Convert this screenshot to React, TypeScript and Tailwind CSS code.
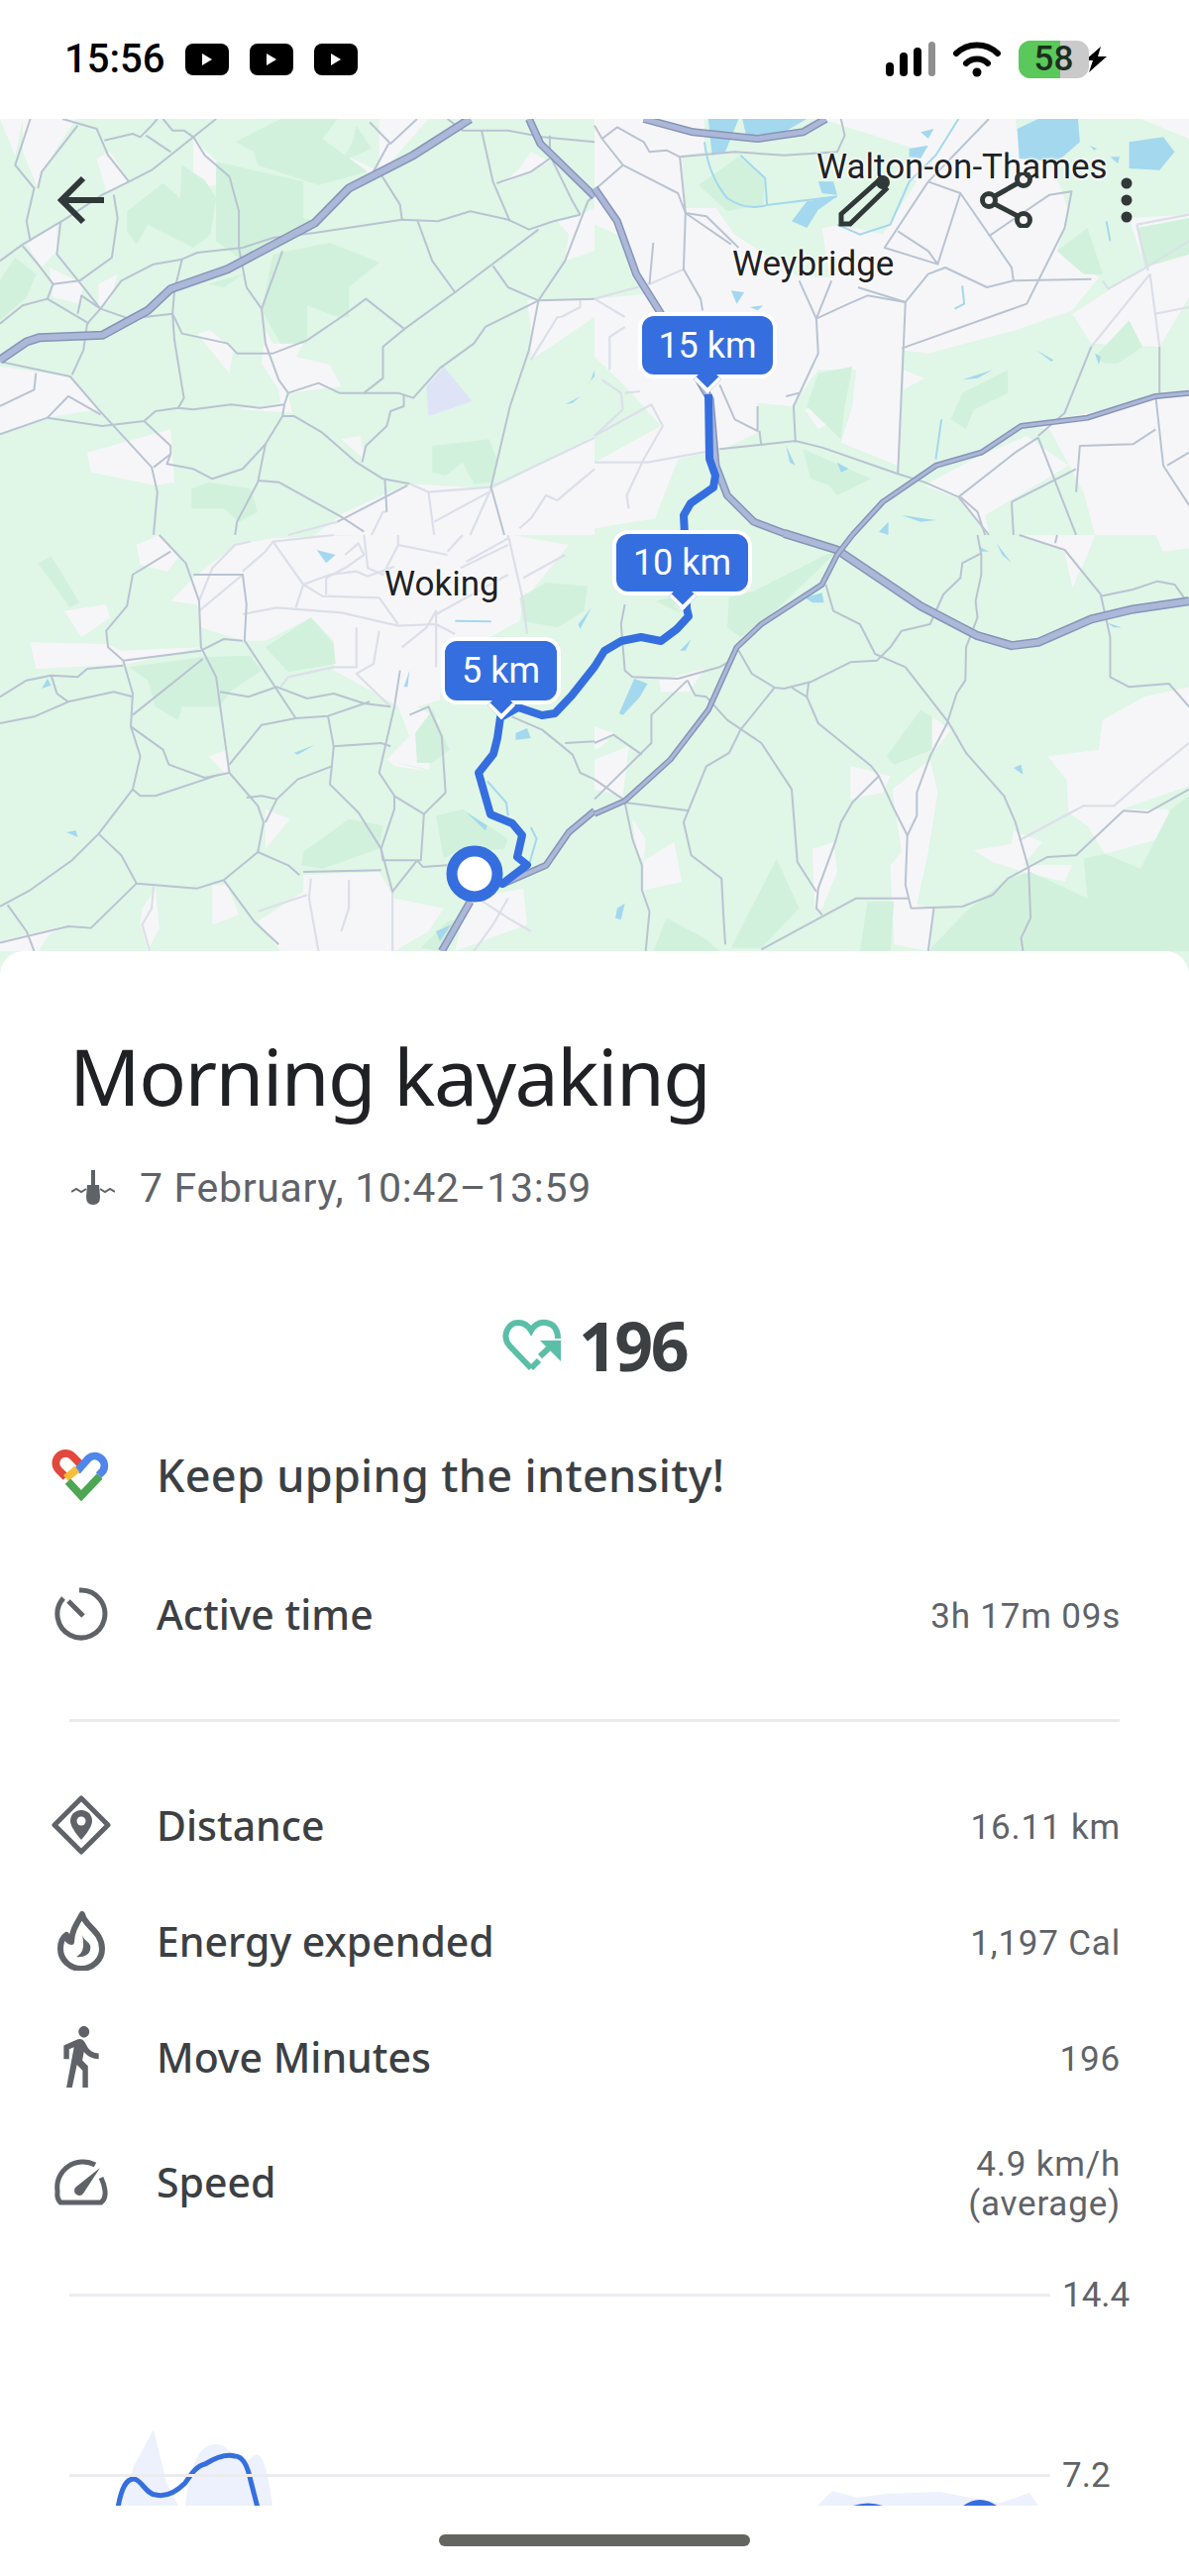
const white: string[][] = [
  // top left
  [
    "60,0 200,0 110,160 100,210 60,100", "0,0 60,0 40,110", "255,120 290,100 340,190 280,220", "510,60 610,170 600,190 530,210 510,170",
    "1000,0 1130,0 1000,170", "860,80 1000,160 860,170", "70,380 150,320 150,400 110,450", "130,450 220,500 210,560 140,540",
    "260,500 310,470 290,550 260,570", "0,750 180,780 260,880 120,905 0,950", "230,1010 450,940 460,1100 410,1110 240,1070",
    "520,650 555,640 615,700 605,770", "700,640 720,680 800,680 780,720 870,745 900,810 760,830 770,890 630,880 740,860 735,820 690,740",
    "1080,1105 1300,1120 1568,960 1568,1260 830,1260 910,1190", "1470,310 1530,290 1568,270 1568,400 1490,430 1500,350",
    "1390,550 1568,545 1568,600 1400,730 1400,630", "1370,150 1400,100 1450,130 1320,200", "900,970 950,960 960,1030",
  ],
  // top right
  [
    "0,0 290,0 290,100 230,110 240,270 130,200 0,170",
    "0,170 130,200 240,270 320,270 370,350 540,480 620,480 620,560 585,620 590,760 520,870 430,860 430,950 340,1000 220,1030 160,1210 0,1240 0,1040 175,930 90,820 0,720 0,545 140,530 80,360 0,320",
    "600,0 1110,0 1120,100 1200,140 1230,210 1250,280 1220,400 1330,480 1260,580 1110,640 880,710 810,700 800,1050 650,980 680,870 690,760 590,760 585,620 620,480 600,330 650,320 760,350 850,190 800,150 870,100",
    "1410,300 1568,290 1568,540 1490,690 1310,680 1260,590 1450,450",
    "1130,930 1480,850 1568,830 1568,1260 1320,1260 1290,1130 1200,940",
    "870,1110 1000,1030 1140,960 1250,1050 1030,1200 1040,1260 960,1150",
    "1440,0 1568,0 1568,60", "815,760 870,785 815,820", "555,880 600,860 640,910 590,940",
  ],
  // bottom left
  [
    "450,200 510,130 620,30 720,10 960,0 1350,0 1500,30 1430,130 1380,200 1370,260 1290,310 1170,320 1160,500 1100,520 1160,560 1130,710 1020,680 1080,610 1050,520 930,440 880,410 880,320 820,250 700,320 640,320 530,280 520,210",
    "80,325 280,330 320,350 530,340 340,390 95,405", "170,230 280,210 290,250 215,310", "360,30 420,0 470,70 440,110 370,90",
    "550,670 600,650 600,730", "700,830 765,860 700,950", "800,1030 1000,1020 1040,1100 1170,1130 1130,1200 1040,1260 740,1260 680,1170 800,1080",
    "560,1060 600,1060 630,1150 560,1180", "375,1130 410,1070 420,1190 390,1260 370,1180", "1250,1100 1380,1070 1390,1180 1200,1260 1220,1160",
    "0,1230 180,1180 130,1210 100,1260 0,1260", "1020,680 1125,715 1040,700",
  ],
  // bottom right
  [
    "0,680 90,640 75,790 0,770", "130,985 210,930 230,1050 130,1075", "100,860 135,920 130,985 110,960", "170,440 290,405 250,475 175,475",
    "675,700 780,730 760,780 675,800", "890,550 940,590 885,670",
    "785,770 885,680 905,780 880,960 850,1120 890,1130 885,1260 790,1240 780,1000 810,960",
    "575,950 630,930 640,1020 600,1130 580,1130",
    "1195,670 1330,650 1340,560 1450,490 1568,460 1568,760 1390,830 1510,830 1530,860 1490,920 1345,965 1300,880 1250,840 1245,740",
    "1000,955 1100,935 1105,895 1180,930 1130,1000 1260,1000 1240,1050 1130,1020 1050,990",
    "1130,0 1320,0 1300,60 1260,160 1240,50", "1480,0 1568,0 1568,40 1500,50", "0,580 50,600 20,640 0,650",
  ],
];

const dark: string[][] = [
  [
    "740,0 890,0 850,60 970,160 840,200 680,140 670,100 620,70", "570,130 800,190 800,300 830,310 640,430 570,370",
    "335,280 430,195 475,240 480,140 540,185 570,240 555,350 510,390 390,320 360,380 335,340", "0,490 40,420 95,470 70,540 0,610",
    "720,410 870,375 1000,435 920,510 920,600 890,600 810,565 810,680 740,680 690,580",
    "1140,990 1290,970 1310,1030 1300,1100 1250,1105 1220,1040 1175,1080 1140,1070",
    "505,1120 550,1100 660,1120 680,1190 630,1220 590,1180 505,1180", "940,20 980,90 900,130 930,70", "550,500 640,470 590,510",
  ],
  [
    "275,200 380,115 450,180 445,260 350,280", "1220,400 1300,330 1340,470 1290,470", "1430,330 1568,300 1568,410 1450,450",
    "970,830 1090,760 1090,830 1000,880 980,940 940,910", "1320,720 1410,610 1445,690 1380,740 1345,740",
    "550,1000 730,1090 640,1140 620,1110 570,1090", "650,970 560,870 590,770 680,750 660,870",
  ],
  [
    "100,85 135,65 210,205 185,220", "340,400 530,370 660,365 690,410 610,470 580,520 480,520 470,560 410,520 390,440",
    "700,340 820,250 880,330 885,390 760,415", "1370,190 1440,145 1550,155 1540,230 1470,280 1380,260", "1095,600 1140,530 1185,650 1140,690 1100,690",
    "1150,850 1220,830 1340,920 1330,950 1200,960 1170,980", "800,960 920,860 1010,880 1000,950 850,1010 795,1000",
    "1110,1250 1180,1170 1220,1160 1160,1260",
  ],
  [
    "770,670 860,530 890,550 890,650 790,695", "350,280 355,190 420,170 610,60 640,50 480,225 385,310", "160,200 200,190 225,235",
    "1290,980 1345,965 1440,1010 1520,830 1568,790 1568,1260 880,1260 980,1140 1090,1040 1150,1020 1300,1100",
    "155,1260 190,1160 290,1220 330,1260", "360,1250 480,980 540,1130 440,1250", "720,1110 790,1110 780,1260 700,1260",
  ],
];

const water: string[][] = [
  ["1555,800 1568,760 1568,780 1552,800", "1490,865 1530,840 1510,860"],
  [
    "1115,30 1170,0 1275,0 1280,70 1220,130 1120,120", "1410,70 1500,55 1530,100 1490,155 1410,150", "300,0 380,0 345,100 310,110",
    "390,0 560,0 500,40 400,50", "830,90 880,80 860,120 830,115", "860,40 895,30 880,60", "590,190 630,190 640,230 600,225",
    "520,310 560,250 640,235 590,275 560,330", "360,520 395,525 375,560", "410,570 445,565 430,580", "1305,80 1325,90 1318,95",
    "1360,115 1385,115 1380,135", "1165,700 1210,730 1205,735", "970,790 1050,760 1010,785", "810,1200 900,1215 860,1220",
    "640,1040 670,1060 650,1070", "750,1250 775,1220 775,1260", "1320,710 1335,720 1330,745", "505,990 530,1050 515,1040",
  ],
  [
    "835,45 885,60 860,85", "175,900 200,895 205,915", "110,465 125,435 135,455", "775,660 830,635 785,665", "1360,600 1390,585 1400,615 1360,620",
    "1230,840 1285,880 1280,895", "1525,270 1560,220 1530,285", "1065,460 1080,410 1075,460", "1150,1200 1190,1180 1160,1230",
  ],
  [
    "555,190 600,175 605,205 575,205", "65,540 105,435 140,450 120,490 75,545", "225,350 255,315 240,350", "1105,705 1125,695 1130,725",
    "55,1160 60,1130 80,1115 70,1165", "1060,25 1100,85 1075,60", "1015,35 1040,50 1020,50", "1350,265 1390,280 1370,280",
  ],
];

const waterLines: string[][] = [
  [],
  [
    "M290,70 Q300,170 350,240 Q400,280 460,260 L640,235", "M385,110 L450,180 455,260", "M960,0 L900,110 830,190 780,320 700,350 640,320",
    "M1350,310 L1360,370", "M970,505 L975,560 950,575", "M915,910 L900,1030",
  ],
  ["M1285,745 L1335,810 1340,850", "M1200,260 L1295,262", "M1400,885 L1415,920 1395,1000"],
  [],
];

const roads: string[][] = [
  [
    "M0,430 L60,380 170,305 270,230 340,190 400,155 510,55 570,0", "M80,0 L40,140 90,210 70,310 80,370", "M205,20 L110,160 100,210",
    "M165,0 L255,30 285,110 340,190", "M275,65 L350,45 370,55 400,20 415,0", "M385,50 L450,100",
    "M430,0 L455,35 485,35 510,55 540,110 605,175 630,280 630,390 650,510 690,575 700,680 735,790 760,830",
    "M300,230 L310,300 295,420 210,490 140,500 100,440 60,385", "M160,310 L150,410 220,510 265,575 230,620 220,700 190,775",
    "M140,500 L125,545 60,565 0,620", "M125,545 L235,620", "M205,590 L215,535 265,575 340,605 455,590",
    "M265,575 L320,490 405,440 480,425 520,405 640,390 720,360 830,345 1060,305 1155,310 1240,280 1340,305 1395,335 1460,310 1530,290",
    "M480,425 L460,520 455,590 480,650 600,680 625,710 720,710 810,670 900,600 965,545 1065,635", "M455,590 L460,670 485,845 470,875",
    "M0,735 L185,780 260,880 400,1055 415,1130 405,1260", "M0,870 L90,820 95,770", "M125,905 L180,840 265,895",
    "M0,955 L125,905 270,930 380,915 410,885 470,875 510,880 610,865 685,875 750,865 760,830 840,800 895,830 1050,830 1090,845 1160,755 1250,680 1280,630 1420,550 1568,545",
    "M750,865 L745,900 775,900 850,950 940,1040 1010,1090 1080,1105", "M380,915 L450,990 450,1015 405,1055",
    "M450,1015 L440,1045 510,1060 560,1090 640,1060 700,985 745,900", "M700,985 L680,1100 625,1220 620,1260", "M680,1095 L735,1100 900,1205 960,1250",
    "M1020,1190 L1015,1090", "M890,1220 L1075,1110", "M1065,835 L1065,870 1030,885 1020,930 965,990 955,1040", "M1200,525 L1068,635 1010,690 1010,785 960,830",
    "M1100,305 L1140,430 1200,525 1420,335", "M1300,445 L1340,510 1420,550", "M1345,870 L1295,1115 1330,1260", "M1345,870 L1395,700 1420,550 1490,430 1550,250 1568,230",
    "M1270,35 L1300,190 1345,310", "M1180,0 L1220,35 1340,35 1430,55 1568,70", "M1310,195 L1400,160 1450,120", "M1450,50 L1450,110 1510,250 1530,290",
    "M1000,160 L1055,260 1060,305", "M690,575 L745,400", "M1025,75 L980,170", "M975,10 L1030,75 1100,0",
  ],
  [
    "M20,60 L75,140 0,215", "M75,140 L220,225 240,285 360,380", "M0,20 L20,60 60,25 130,70 145,100 190,95 225,115 370,100 500,110 640,100 660,50 650,0",
    "M240,285 L295,295 380,390", "M240,285 L235,455 280,545 285,580", "M155,375 L145,500", "M225,115 L240,285",
    "M540,490 L585,605 670,560 720,535 820,555 880,470 925,450 1035,510 1105,490 1310,485", "M820,555 L800,1075", "M820,555 L695,510",
    "M810,695 L1140,560 1240,330 1258,220 1200,230 1110,300 1040,355", "M905,440 L965,225 1100,450 1105,490", "M880,190 L965,225", "M880,190 L765,390 905,440 880,400 800,340",
    "M1040,0 L880,190", "M625,490 L585,605 590,710 525,870 530,980", "M530,975 L600,995 800,1075 870,1100 960,1145 1040,1260", "M330,1000 L530,975",
    "M330,805 L370,910 430,945 430,870", "M435,945 L440,990", "M505,840 L540,830", "M960,1145 L1110,1010 1170,965", "M1170,965 L1270,1260",
    "M1270,1130 L1280,990 1420,985 1480,940", "M1480,840 L1500,1050 1568,1170", "M1490,690 L1490,830", "M1310,690 L1240,890 1170,960",
    "M1100,1160 L1270,1060", "M1100,1160 L1105,1260", "M1510,1050 L1568,1010", "M965,1145 L1010,1190 1030,1260",
  ],
  [
    "M420,0 L490,85 525,200 530,340 570,430 605,720 680,820 695,870 680,960", "M510,120 L640,120 650,210 645,320 780,555",
    "M450,50 L350,120 335,215 280,290 285,340 325,380 350,480 345,580 370,670 350,770 260,905 190,985 80,1075 0,1125", "M325,380 L530,350 590,315 640,320",
    "M0,570 L90,550 180,505 300,475 350,490", "M0,490 L70,440 135,425 205,430 230,405 325,395", "M135,425 L150,480 180,505", "M350,545 L535,375",
    "M345,580 L430,650 445,695 540,735 605,720", "M350,770 L370,790 410,790 580,725", "M580,475 L655,490 730,460 810,495 880,480 960,510 1030,520",
    "M605,695 L690,575 780,555 865,548 975,505", "M865,548 L880,640 875,700 785,740 730,800 700,870", "M880,640 L1005,630 1030,640", "M650,795 L690,790 730,800",
    "M260,905 L320,970 360,1055 520,1070 590,1045 680,960 760,1000 790,1030", "M590,1045 L670,1170 735,1240", "M360,1055 L240,1190 180,1185 0,1235",
    "M20,1120 L70,1200 90,1260", "M875,700 L870,755 945,840 1005,950 1040,830 1040,790 1000,720 1040,520 1055,410", "M1040,790 L1118,845 1175,780 1165,610 1130,520 1080,545",
    "M1118,845 L1110,985 1010,985 1005,950 1035,1080 1100,985", "M1005,1015 L800,1020", "M1100,985 L1115,1005 1180,1000", "M1350,550 L1430,590 1510,665 1530,720 1568,740", "M1490,630 L1568,625",
  ],
  [
    "M1010,0 L1020,60 1020,120 1005,200 1010,250 980,340 978,440 955,480 930,570 885,670 850,780 850,850 825,910 820,1060 835,1130 970,1125 1050,1090 1090,1040 1195,975 1270,970 1395,835 1460,840 1568,770",
    "M750,730 L790,830 825,910", "M1020,55 L970,85 965,130 920,180 885,270 810,290 780,340 745,380 675,385 570,445 500,465 475,462 415,420 375,340",
    "M610,150 L630,230 700,270 740,360 820,400 935,570 980,660 1080,790 1110,870 1145,1010 1150,1160 1125,1220 1130,1260",
    "M475,462 L385,590 355,660 295,700 235,870 255,970 335,1040 340,1150 345,1240", "M520,462 L560,490 590,570 730,700 750,730 680,810 650,870 635,930 590,1070 585,1130 600,1150",
    "M565,445 L560,490", "M245,440 L265,485 295,490 350,560 440,630 520,770 535,990 585,1080", "M245,440 L150,545 150,630 0,800", "M80,210 L70,270 80,410 100,430 220,435 330,400 360,380",
    "M0,630 L50,605 125,665", "M0,740 L75,800", "M80,810 L250,835", "M80,810 L100,920 125,1000 125,1075 145,1140 135,1260", "M440,1255 L690,1100 830,1100", "M895,1130 L880,1260",
    "M1120,0 L1240,45 1335,180 1360,310 1360,430 1410,460 1515,450 1568,520", "M1335,185 L1420,165 1485,140 1530,150 1555,190", "M1220,0 L1215,25",
  ],
];

const lightRoads: string[][] = [
  [
    "M1080,1105 L1130,1130 1295,1115 1568,965", "M1130,1130 L1145,1260", "M1145,1220 L1290,1130", "M1400,1210 L1440,1140 1470,1155 1568,1060", "M1370,1240 L1400,1210",
    "M890,1220 L760,1260", "M980,1260 L1010,1190 1020,1190", "M1295,1120 L1240,1260", "M1480,600 L1530,570 1530,550", "M1400,730 L1470,600 1480,600",
  ],
  [
    "M235,455 L145,500 0,545", "M0,1040 L140,1040 330,1000", "M0,960 L150,865 180,930 130,1030 85,1140 90,1180", "M80,830 L120,825", "M40,760 L40,660 80,630", "M0,545 L80,600",
    "M20,790 L70,830 75,880 0,960", "M1465,470 L1490,690", "M1465,470 L1310,690", "M1568,570 L1480,590", "M1340,490 L1355,515 1440,460 1568,370", "M1430,320 L1568,290", "M1430,320 L1460,460",
  ],
  [
    "M525,230 L640,120", "M640,240 L730,220 900,235 1050,275 1150,270 1200,300", "M780,220 L800,150 870,120 940,110 970,125 1040,95", "M800,150 L850,185 1000,190 1050,270", "M720,20 L800,150",
    "M640,110 L700,50 720,20 880,0", "M910,60 L945,25 960,60 910,100 860,130 860,180", "M940,280 L940,400 880,400 760,430 740,460", "M1000,290 L985,390 940,420 1030,520", "M1060,340 L1125,280 1150,230 1150,400",
    "M1340,0 L1380,200 1390,300", "M1150,240 L1340,120", "M1215,100 L1340,30", "M1230,80 L1340,10", "M1180,50 L1220,0", "M960,0 L970,100 1010,120 1050,30 1050,0", "M1050,30 L1180,60", "M1380,130 L1490,60",
    "M680,1140 L810,1090", "M820,1040 L815,1100 840,1260", "M900,1200 L920,1130 920,1045", "M1035,1080 L1035,1260", "M1320,1060 L1260,1100 1340,1160 1400,1200", "M1340,1100 L1300,1180 1250,1260", "M525,200 L560,100 620,30 660,20",
    "M405,1065 L400,1130 375,1180 395,1260",
  ],
  ["M1120,925 L1290,820 1370,820 1460,730 1568,630"],
];

const motorways: { q: number; d: string; w: number }[] = [
  { q: 0, d: "M0,730 L70,675 105,662 270,655 390,580 450,515 600,455 830,315 920,210 1090,110 1240,0", w: 7 },
  { q: 0, d: "M1395,0 L1425,75 1568,235", w: 6 },
  { q: 1, d: "M0,210 L60,310 110,470 170,580 305,850 320,1050 350,1140 420,1220 500,1255", w: 6 },
  { q: 1, d: "M130,0 L260,40 430,60 550,40 610,0", w: 6 },
  { q: 1, d: "M680,1260 L760,1160 900,1050 1020,1010 1125,930 1300,905 1480,840 1568,830", w: 4 },
  { q: 2, d: "M1165,1260 L1240,1110", w: 6 },
  { q: 2, d: "M1320,1060 L1440,1000 1500,900 1568,835", w: 5 },
  { q: 3, d: "M500,-5 L640,45 860,215 1010,305 1100,335 1170,325 1310,255 1420,225 1568,200", w: 7 },
  { q: 3, d: "M0,845 L80,805 200,680 300,530 375,340 440,270 600,150 640,60 680,0", w: 4 },
];

const offsets = ["translate(0 120)", "translate(600 120)", "translate(0 540)", "translate(600 540)"];
const quad = (q: number) => `${offsets[q]} scale(0.3827 0.3333)`;

const MapDrawing = () => (
  <svg className="absolute inset-0 w-full h-full" viewBox="0 120 1200 864">
    <rect x="0" y="120" width="1200" height="864" fill="#e0f6e7" />
    {offsets.map((_, q) => (
      <g key={q} transform={quad(q)}>
        {white[q].map((p) => <polygon key={p} points={p} fill="#f6f6f8" />)}
        {dark[q].map((p) => <polygon key={p} points={p} fill="#d1f1dc" />)}
        {water[q].map((p) => <polygon key={p} points={p} fill="#a3d8ee" />)}
        {waterLines[q].map((d) => <path key={d} d={d} fill="none" stroke="#a3d8ee" strokeWidth="2" vectorEffect="non-scaling-stroke" />)}
        {q === 0 && <polygon points="1125,810 1170,750 1245,855 1130,900" fill="#dfe3f6" />}
      </g>
    ))}
    {offsets.map((_, q) => (
      <g key={q} transform={quad(q)} fill="none" strokeLinejoin="round">
        {lightRoads[q].map((d) => <path key={d} d={d} stroke="#dcdfe9" strokeWidth="2.2" vectorEffect="non-scaling-stroke" />)}
        {roads[q].map((d) => <path key={d} d={d} stroke="#b9c3d2" strokeWidth="2" vectorEffect="non-scaling-stroke" />)}
      </g>
    ))}
    {motorways.map((m) => (
      <g key={m.d} transform={quad(m.q)} fill="none" strokeLinejoin="round">
        <path d={m.d} stroke="#8794b8" strokeWidth={m.w + 2} vectorEffect="non-scaling-stroke" />
        <path d={m.d} stroke="#abb8d8" strokeWidth={m.w - 1} vectorEffect="non-scaling-stroke" />
      </g>
    ))}
    <path
      d="M715,398 L716,463 722,480 720,492 697,508 690,520 692,560 693,614 695,622 683,635 667,647 647,643 627,647 610,657 600,673 577,702 560,720 547,722 523,714 505,724 502,745 498,761 483,780 495,822 517,831 527,843 522,865 532,873 507,892 479,882"
      fill="none"
      stroke="#356fdf"
      strokeWidth="8"
      strokeLinejoin="round"
    />
    <circle cx="479" cy="882" r="23" fill="#fff" stroke="#356fdf" strokeWidth="11" />
  </svg>
);

const Pin = ({ label, className }: { label: string; className: string }) => (
  <div className={`absolute flex items-center justify-center rounded-[16px] border-4 border-white bg-[#356fdf] font-['Roboto',sans-serif] text-[36px] text-white ${className}`}>
    <span className="relative z-10">{label}</span>
    <div className="absolute -bottom-[15px] left-1/2 size-[20px] -translate-x-1/2 rotate-45 border-r-4 border-b-4 border-white bg-[#356fdf]" />
  </div>
);

const placeLabel = "absolute font-['Roboto',sans-serif] text-[35px] leading-[40px] text-[#202124] [text-shadow:0_0_3px_#fff,0_0_3px_#fff,0_0_4px_#fff]";

const YouTube = () => (
  <div className="flex h-[32px] w-[44px] items-center justify-center rounded-[8px] bg-black">
    <svg width="12" height="14" viewBox="0 0 12 14"><polygon points="1,1 11,7 1,13" fill="#fff" /></svg>
  </div>
);

const StatusBar = () => (
  <div className="flex h-[120px] items-center justify-between pr-[82px] pl-[65px]">
    <div className="flex items-center gap-[21px]">
      <span className="font-['Roboto',sans-serif] text-[40px] leading-[44px] font-medium text-black">15:56</span>
      <YouTube />
      <YouTube />
      <YouTube />
    </div>
    <div className="flex items-center">
      <svg width="50" height="36" viewBox="0 0 50 36">
        <rect x="0" y="21" width="8" height="14" rx="4" fill="#000" />
        <rect x="14" y="11" width="8" height="24" rx="4" fill="#000" />
        <rect x="28" y="6" width="8" height="29" rx="4" fill="#000" />
        <rect x="43" y="0" width="7" height="35" rx="3.5" fill="#8f8f8f" />
      </svg>
      <svg className="ml-[18px]" width="48" height="36" viewBox="0 0 48 36" fill="none" stroke="#000" strokeWidth="6" strokeLinecap="round">
        <path d="M3,12 A30,30 0 0 1 45,12" />
        <path d="M13,22 A16,16 0 0 1 35,22" />
        <circle cx="24" cy="31" r="4.5" fill="#000" stroke="none" />
      </svg>
      <div className="relative ml-[18px] flex h-[38px] w-[71px] items-center justify-center rounded-[12px] bg-[#cacaca]">
        <div className="absolute inset-y-0 left-0 w-[42px] rounded-l-[12px] bg-[#5ac85a]" />
        <span className="relative font-['Roboto',sans-serif] text-[35px] leading-[38px] font-medium text-[#1c2f1c]">58</span>
      </div>
      <svg className="-ml-[5px]" width="24" height="26" viewBox="0 0 24 26"><polygon points="17,0 1,14 9,14 5,26 23,10 14,10" fill="#000" /></svg>
    </div>
  </div>
);

const ToolBar = () => (
  <div className="absolute inset-x-0 top-[54px] flex h-[56px] items-center pl-[56px] text-[#303838]">
    <svg width="52" height="50" viewBox="0 0 52 50" fill="none" stroke="currentColor" strokeWidth="6">
      <path d="M49,25 L7,25 M28,3 L6,25 28,47" />
    </svg>
    <svg className="ml-[737px]" width="56" height="56" viewBox="0 0 56 56" fill="none" stroke="currentColor" strokeWidth="5">
      <path d="M4,52 L4,42 41,9 49,17 13,52 Z" />
      <circle cx="46" cy="10" r="7" fill="currentColor" stroke="none" />
    </svg>
    <svg className="ml-[85px]" width="60" height="56" viewBox="0 0 60 56" fill="none" stroke="currentColor" strokeWidth="5">
      <circle cx="12" cy="28" r="6.5" />
      <circle cx="47" cy="7" r="6.5" />
      <circle cx="47" cy="48" r="6.5" />
      <path d="M18,24 L41,11 M18,32 L41,44" />
    </svg>
    <svg className="ml-[80px]" width="22" height="56" viewBox="0 0 22 56" fill="currentColor">
      <circle cx="11" cy="11" r="5.5" />
      <circle cx="11" cy="28" r="5.5" />
      <circle cx="11" cy="45" r="5.5" />
    </svg>
  </div>
);

const TimerIcon = () => (
  <svg width="54" height="54" viewBox="0 0 54 54" fill="none" stroke="#5f6368" strokeWidth="5">
    <path d="M25,3 L27,3 A24,24 0 1 1 9,11" />
    <path d="M14,14 L29,29" />
  </svg>
);

const DistanceIcon = () => (
  <svg width="60" height="60" viewBox="0 0 60 60">
    <path d="M30,3 L57,30 30,57 3,30 Z" fill="none" stroke="#5f6368" strokeWidth="5" strokeLinejoin="round" />
    <path d="M30,15 C23,15 19,20 19,26 C19,33 30,45 30,45 C30,45 41,33 41,26 C41,20 37,15 30,15 Z" fill="#5f6368" />
    <circle cx="30" cy="26" r="4.5" fill="#fff" />
  </svg>
);

const FlameIcon = () => (
  <svg width="48" height="60" viewBox="0 0 48 60">
    <path d="M25,3 C27,15 45,20 45,38 A21,20 0 0 1 3,38 C3,31 6,26 9,24 C9,29 12,31 14,31 C14,20 20,12 25,3 Z" fill="none" stroke="#5f6368" strokeWidth="6" strokeLinejoin="round" />
    <path d="M25,24 C27,31 35,31 33,39 C32,44 26,47 19,46 C27,42 27,34 25,24 Z" fill="#5f6368" />
  </svg>
);

const WalkIcon = () => (
  <svg width="38" height="62" viewBox="5.5 1.5 14 21.5" preserveAspectRatio="none" fill="#5f6368">
    <path d="M13.5 5.5c1.1 0 2-.9 2-2s-.9-2-2-2-2 .9-2 2 .9 2 2 2zM9.8 8.9L7 23h2.1l1.8-8 2.1 2v6h2v-7.5l-2.1-2 .6-3C14.8 12 16.8 13 19 13v-2c-1.9 0-3.5-1-4.3-2.4l-1-1.6c-.4-.6-1-1-1.7-1-.3 0-.5.1-.8.1L6 8.3V13h2V9.6l1.8-.7" />
  </svg>
);

const SpeedIcon = () => (
  <svg width="60" height="48" viewBox="0 0 60 48" fill="none" stroke="#5f6368" strokeWidth="5">
    <path d="M44,7 A26,26 0 0 0 6,34 Q5,41 9,45 L50,45 Q55,41 54,33 Q53,26 50,20" />
    <path d="M49,10 L32,36 A5,5 0 1 1 25,29 Z" fill="#5f6368" stroke="none" />
  </svg>
);

const FitLogo = () => (
  <svg width="60" height="52" viewBox="0 0 58 50" fill="none" strokeWidth="7.5">
    <path d="M14,27 L7,20 A9.5,9.5 0 0 1 20.5,6.5 L29,15" stroke="#e2483d" />
    <path d="M25,21 L36,8.5 A9.5,9.5 0 0 1 50,21 L46,25" stroke="#4f86ec" />
    <path d="M14,28 L25,19" stroke="#f7bf39" />
    <path d="M16,31 L29,45 L47,26" stroke="#4ea553" />
  </svg>
);

const Row = ({ icon, label, value, className }: { icon: React.ReactNode; label: string; value: React.ReactNode; className: string }) => (
  <div className={`flex h-[60px] items-center pr-[69px] pl-[52px] ${className}`}>
    <div className="mr-[46px] flex w-[60px] justify-center">{icon}</div>
    <span className="flex-1 font-['Noto_Sans',sans-serif] text-[41px] leading-[44px] font-medium text-[#3c4043]">{label}</span>
    <span className="mt-[6px] text-right font-['Roboto',sans-serif] text-[35px] leading-[40px] tracking-[0.8px] text-[#5f6368]">{value}</span>
  </div>
);

const Chart = () => (
  <div className="relative h-[297px] overflow-hidden pt-[64px] pl-[70px]">
    <svg className="absolute inset-0" width="1200" height="297" viewBox="0 2233 1200 297">
      <path d="M122,2530 L135,2490 L155,2453 L168,2507 L180,2530 Z" fill="#ecf1fd" />
      <path d="M187,2530 C192,2490 200,2468 218,2468 C232,2468 240,2490 252,2483 C260,2474 268,2474 275,2530 Z" fill="#ecf1fd" />
      <path d="M825,2530 L840,2515 L865,2522 L895,2518 L949,2516 L979,2522 L1010,2527 L1039,2517 L1048,2530 Z" fill="#ecf1fd" />
      <path d="M119,2532 C123,2510 128,2503 135,2503 C142,2503 148,2519 157,2519 C165,2521 175,2519 187,2507 C193,2498 198,2490 207,2488 C220,2480 230,2478 237,2480 C248,2480 252,2500 253,2505 L260,2532" fill="none" stroke="#356fdf" strokeWidth="5" />
      <path d="M861,2530 Q876,2525 891,2530 Z M972,2530 Q989,2518 1006,2530 Z" fill="#356fdf" />
    </svg>
    <div className="relative flex flex-col gap-[142px]">
      <div className="flex h-[40px] items-center">
        <div className="h-[3px] w-[990px] bg-[#ecebf0]" />
        <span className="mt-[2px] ml-[12px] font-['Roboto',sans-serif] text-[35px] text-[#5f6368]">14.4</span>
      </div>
      <div className="flex h-[40px] items-center">
        <div className="h-[3px] w-[990px] bg-[#ecebf0]" />
        <span className="mt-[2px] ml-[12px] font-['Roboto',sans-serif] text-[35px] text-[#5f6368]">7.2</span>
      </div>
    </div>
  </div>
);

const App = () => {
  return (
    <div className="h-[2600px] w-[1200px] overflow-hidden bg-white">
      <StatusBar />

      <div className="relative h-[864px] overflow-hidden">
        <MapDrawing />
        <span className={`${placeLabel} left-[824px] top-[29px]`}>Walton-on-Thames</span>
        <span className={`${placeLabel} left-[739px] top-[127px]`}>Weybridge</span>
        <span className={`${placeLabel} left-[388px] top-[450px]`}>Woking</span>
        <Pin label="15 km" className="left-[644px] top-[195px] h-[67px] w-[140px]" />
        <Pin label="10 km" className="left-[618px] top-[415px] h-[66px] w-[141px]" />
        <Pin label="5 km" className="left-[445px] top-[523px] h-[68px] w-[121px]" />
        <ToolBar />
      </div>

      <div className="relative -mt-6 rounded-t-[24px] bg-white">
        <h1 className="pt-[76px] pl-[70px] font-['Noto_Sans',sans-serif] text-[79px] leading-[100px] font-normal tracking-[-1.5px] text-[#202124]">Morning kayaking</h1>

        <div className="mt-[38px] flex h-[50px] items-center pl-[72px]">
          <svg width="44" height="36" viewBox="0 0 44 36" fill="#5f6368">
            <rect x="20" y="0" width="4" height="20" />
            <path d="M16,15 L28,15 L29,27 Q29,35 22,35 Q15,35 15,27 Z" />
            <path d="M0,22 L5,19 10,22 15,19 M29,19 L34,22 39,19 44,22" fill="none" stroke="#5f6368" strokeWidth="2" />
          </svg>
          <span className="ml-[25px] font-['Roboto',sans-serif] text-[41px] leading-[48px] tracking-[0.7px] text-[#5f6368]">7 February, 10:42–13:59</span>
        </div>

        <div className="mt-[104px] flex h-[60px] items-center justify-center gap-[17px]">
          <svg width="60" height="54" viewBox="0 0 60 54" fill="none" stroke="#5bbfa8" strokeWidth="6">
            <path d="M29,50 L7,27 C-1,17 6,4 16,4 C22,4 26,7 29,12 C32,7 37,3 44,4 C52,5 56,11 56,20" />
            <path d="M29,50 L37,42" />
            <path d="M38,38 L52,25" />
            <polygon points="38,22 59,22 59,43" fill="#5bbfa8" stroke="none" />
          </svg>
          <span className="font-['Noto_Sans',sans-serif] text-[68px] leading-[72px] font-bold tracking-[-2.5px] text-[#3c4043]">196</span>
        </div>

        <div className="mt-[71px] flex h-[60px] items-center pl-[52px]">
          <FitLogo />
          <span className="ml-[46px] font-['Noto_Sans',sans-serif] text-[45px] leading-[52px] font-medium tracking-[0.3px] text-[#3c4043]">Keep upping the intensity!</span>
        </div>

        <Row className="mt-[80px]" icon={<TimerIcon />} label="Active time" value="3h 17m 09s" />

        <div className="mx-[70px] mt-[76px] h-[3px] bg-[#e8eaed]" />

        <Row className="mt-[74px]" icon={<DistanceIcon />} label="Distance" value="16.11 km" />
        <Row className="mt-[57px]" icon={<FlameIcon />} label="Energy expended" value="1,197 Cal" />
        <Row className="mt-[57px]" icon={<WalkIcon />} label="Move Minutes" value="196" />
        <Row className="mt-[66px]" icon={<SpeedIcon />} label="Speed" value={<>4.9 km/h<br />(average)</>} />

        <Chart />

        <div className="flex h-[70px] justify-center pt-[29px]">
          <div className="h-[12px] w-[314px] rounded-[6px] bg-[#636561]" />
        </div>
      </div>
    </div>
  );
};

export default App;
